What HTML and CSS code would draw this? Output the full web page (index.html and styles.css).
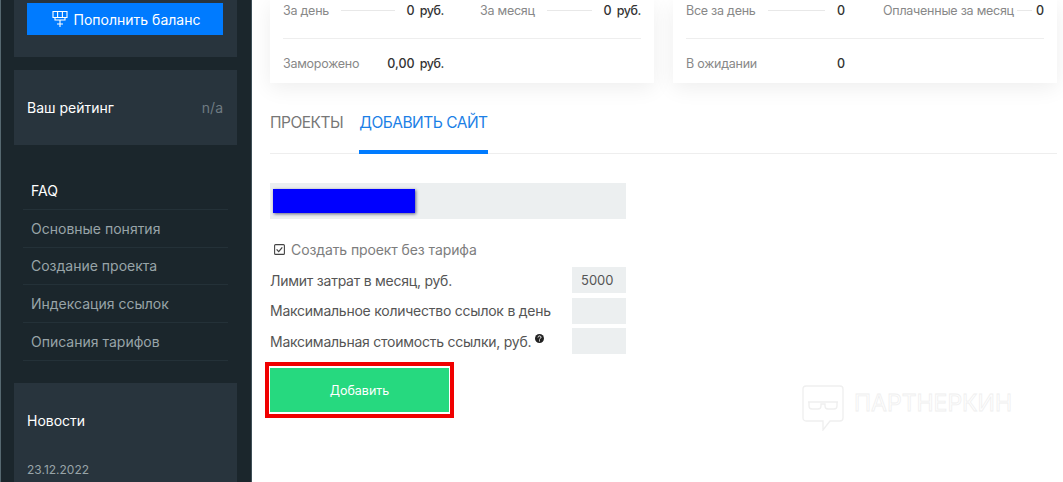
FILE: index.html
```html
<html>

<head>
  <meta charset="utf-8">
  <link rel="stylesheet" href="styles.css">
</head>

<body>
  <div class="sidebar">
    <div class="panel panel-balance">
      <button class="topup">
        <svg class="topup-icon" width="16" height="18" viewBox="0 0 16 18" fill="none" stroke="#fff" stroke-width="1.1">
          <path d="M1 1.5h14v6h-14zM5.6 1.5v6M10.4 1.5v6M3 7.5v2.5h10v-2.5M8 10v7M5 14h6" />
        </svg>
        Пополнить баланс
      </button>
    </div>

    <div class="panel panel-rating">
      <div>Ваш рейтинг</div>
      <div class="rating-value">n/a</div>
    </div>

    <div class="faq">
      <div class="faq-item faq-title">FAQ</div>
      <div class="faq-item">Основные понятия</div>
      <div class="faq-item">Создание проекта</div>
      <div class="faq-item">Индексация ссылок</div>
      <div class="faq-item">Описания тарифов</div>
    </div>

    <div class="panel panel-news">
      <div class="news-title">Новости</div>
      <div class="news-date">23.12.2022</div>
    </div>
  </div>

  <div class="main">
    <div class="cards">
      <div class="card">
        <div class="stats">
          <div class="stat">
            <span class="stat-label">За день</span>
            <span class="stat-line"></span>
            <span class="stat-value">0</span>
            <span class="stat-unit">руб.</span>
          </div>
          <div class="stat">
            <span class="stat-label">За месяц</span>
            <span class="stat-line"></span>
            <span class="stat-value">0</span>
            <span class="stat-unit">руб.</span>
          </div>
        </div>
        <div class="stats stats-bottom">
          <div class="stat">
            <span class="stat-label">Заморожено</span>
            <span class="stat-line stat-line-empty"></span>
            <span class="stat-value">0,00</span>
            <span class="stat-unit">руб.</span>
          </div>
        </div>
      </div>

      <div class="card">
        <div class="stats">
          <div class="stat stat-count">
            <span class="stat-label">Все за день</span>
            <span class="stat-line"></span>
            <span class="stat-value">0</span>
          </div>
          <div class="stat">
            <span class="stat-label">Оплаченные за месяц</span>
            <span class="stat-line stat-line-tight"></span>
            <span class="stat-value">0</span>
          </div>
        </div>
        <div class="stats stats-bottom">
          <div class="stat stat-count">
            <span class="stat-label">В ожидании</span>
            <span class="stat-line stat-line-empty"></span>
            <span class="stat-value">0</span>
          </div>
        </div>
      </div>
    </div>

    <div class="tabs">
      <div class="tab">ПРОЕКТЫ</div>
      <div class="tab tab-active">ДОБАВИТЬ САЙТ</div>
    </div>

    <div class="form">
      <div class="site-input">
        <div class="redacted"></div>
      </div>

      <label class="check-row">
        <svg class="check-icon" width="11" height="11" viewBox="0 0 11 11" fill="none" stroke="#444">
          <rect x="0.6" y="0.6" width="9.8" height="9.8" rx="1" stroke-width="1.1" />
          <path d="M2.6 5.4l2.1 2.2 3.6-4.2" stroke-width="1.3" />
        </svg>
        Создать проект без тарифа
      </label>

      <div class="form-row">
        <div>Лимит затрат в месяц, руб.</div>
        <div class="num-input">5000</div>
      </div>
      <div class="form-row">
        <div>Максимальное количество ссылок в день</div>
        <div class="num-input"></div>
      </div>
      <div class="form-row">
        <div>Максимальная стоимость ссылки, руб.
          <svg class="help-icon" width="9" height="9" viewBox="0 0 9 9">
            <circle cx="4.5" cy="4.5" r="4.5" fill="#222" />
            <path d="M3 3.5c0-2 3-2 3-.2 0 1.100-1.500 1-1.500 2.200" fill="none" stroke="#fff" stroke-width="1" />
            <rect x="4" y="6.300" width="1" height="1.100" fill="#fff" />
          </svg>
        </div>
        <div class="num-input"></div>
      </div>

      <div class="add-frame">
        <button class="add-btn">Добавить</button>
      </div>
    </div>

    <div class="watermark">
      <svg width="42" height="46" viewBox="0 0 42 46" fill="none" stroke="#efefef" stroke-width="1.3">
        <path d="M4 1h34a3 3 0 0 1 3 3v29a3 3 0 0 1-3 3h-10l-7 9v-9h-17a3 3 0 0 1-3-3v-29a3 3 0 0 1 3-3z" />
        <path d="M6 17h30M7 17v4a3 3 0 0 0 3 3h6a3 3 0 0 0 3-3v-2h4v2a3 3 0 0 0 3 3h6a3 3 0 0 0 3-3v-4" />
      </svg>
      <span class="watermark-text">ПАРТНЕРКИН</span>
    </div>
  </div>
</body>

</html>
```

FILE: styles.css
```css
html,
body {
  height: 482px;
  overflow: hidden;
}

body {
  display: flex;
  margin: 0;

  font-family: "Inter", "Open Sans", sans-serif;
  font-size: 14px;
  color: #555;
  background: #fff;
}

button {
  border: none;
  font-family: inherit;
  color: #fff;
}

.sidebar {
  flex: none;
  box-sizing: border-box;
  width: 252px;
  height: 482px;
  padding: 0 14px 0 13px;

  background: #1b262c;
  border-left: 1px solid #566870;
  border-right: 1px solid #3f5058;
  overflow: hidden;
}

.panel {
  background: #28343d;
  color: #fff;
}

.panel-balance {
  height: 57px;
  padding: 3px 13px 0;
  box-sizing: border-box;
}

.topup {
  display: flex;
  justify-content: center;
  align-items: center;
  gap: 6px;

  width: 196px;
  height: 32px;
  padding: 0 0 0 2px;

  background: #007bff;
  font-size: 14px;
}

.topup-icon {
  flex: none;
}

.panel-rating {
  display: flex;
  justify-content: space-between;
  align-items: center;

  height: 75px;
  margin-top: 13px;
  padding: 0 14px 0 13px;
  box-sizing: border-box;
}

.rating-value {
  color: #6f7b82;
}

.faq {
  margin-top: 27px;
  padding: 0 9px;
  height: 211px;
  box-sizing: border-box;
}

.faq-item {
  display: flex;
  align-items: center;

  height: 37.75px;
  padding-left: 8px;

  color: #98a4a8;
  border-bottom: 1px solid #243138;
  box-sizing: border-box;
}

.faq-title {
  color: #fff;
}

.panel-news {
  height: 120px;
  padding: 29px 13px 0;
  box-sizing: border-box;
}

.news-title {
  line-height: 18px;
}

.news-date {
  margin-top: 32px;
  font-size: 12px;
  color: #98a4a8;
}

.main {
  position: relative;
  flex: 1;
  padding: 0 6px 0 18px;
}

.cards {
  display: grid;
  grid-template-columns: 384px 384px;
  gap: 19px;
}

.card {
  height: 83px;
  padding: 0 13px;
  box-sizing: border-box;

  background: #fff;
  box-shadow: 0px 5px 20px rgba(0, 0, 0, 0.07);
}

.stats {
  display: grid;
  grid-template-columns: 161px 161px;
  gap: 36px;

  height: 39px;
  padding-top: 1px;
  box-sizing: border-box;

  border-bottom: 1px solid #eee;
}

.stats-bottom {
  height: 44px;
  padding-top: 15px;
  border-bottom: none;
}

.stat {
  display: flex;
  align-items: center;
  height: 18px;
  font-size: 12.5px;
}

.stat-count {
  padding-right: 2px;
}

.stat-label {
  color: #888;
  white-space: nowrap;
  letter-spacing: -0.25px;
}

.stat-line {
  flex: 1;
  height: 1px;
  margin: 0 12px;
  background: #e8e8e8;
}

.stat-line-tight {
  margin: 0 4px 0 3px;
}

.stat-line-empty {
  background: none;
}

.stat-value {
  font-weight: 500;
  color: #333;
}

.stat-unit {
  margin-left: 5px;
  font-weight: 500;
  letter-spacing: -0.4px;
  color: #333;
}

.tabs {
  display: flex;
  gap: 16px;
  height: 71px;
  box-sizing: border-box;
  border-bottom: 1px solid #eee;
}

.tab {
  padding-top: 30px;
  font-size: 15.5px;
  letter-spacing: -0.5px;
  color: #777;
}

.tab-active {
  height: 71px;
  box-sizing: border-box;
  color: #1c7fe6;
  border-bottom: 4px solid #007bff;
}

.form {
  width: 356px;
  padding-top: 29px;
}

.site-input {
  height: 36px;
  padding: 6px 3px;
  box-sizing: border-box;
  background: #eceff0;
}

.redacted {
  width: 142px;
  height: 24px;
  background: #0000ff;
  box-shadow: 1px 1px 3px rgba(0, 0, 60, 0.6);
}

.check-row {
  display: flex;
  align-items: center;
  gap: 6px;

  height: 18px;
  margin-top: 21px;
  padding-left: 4px;

  letter-spacing: -0.1px;
  color: #7d7d7d;
}

.check-icon {
  flex: none;
}

.form-row {
  display: flex;
  justify-content: space-between;
  align-items: center;

  height: 26px;
  margin-top: 4.5px;
  letter-spacing: -0.24px;
  color: #555;
}

.check-row + .form-row {
  margin-top: 9px;
}

.help-icon {
  vertical-align: 4px;
}

.num-input {
  width: 54px;
  height: 26px;
  padding-left: 9px;
  box-sizing: border-box;

  line-height: 27px;
  font-size: 13px;
  letter-spacing: 0;
  background: #eceff0;
}

.add-frame {
  width: 189px;
  height: 56px;
  margin: 8px 0 0 -5px;
  padding: 1px;
  box-sizing: border-box;

  border: 4px solid #f00000;
  background: #fff;
}

.add-btn {
  display: block;
  width: 179px;
  height: 44px;
  margin: 1px 0 0 0;
  padding: 0;

  background: #26d97f;
  font-size: 12.5px;
}

.watermark {
  position: absolute;
  left: 550px;
  top: 385px;

  display: flex;
  align-items: center;
  gap: 10px;
}

.watermark-text {
  margin-top: -10px;
  font-size: 23px;
  color: transparent;
  -webkit-text-stroke: 0.8px #efefef;
}
```
